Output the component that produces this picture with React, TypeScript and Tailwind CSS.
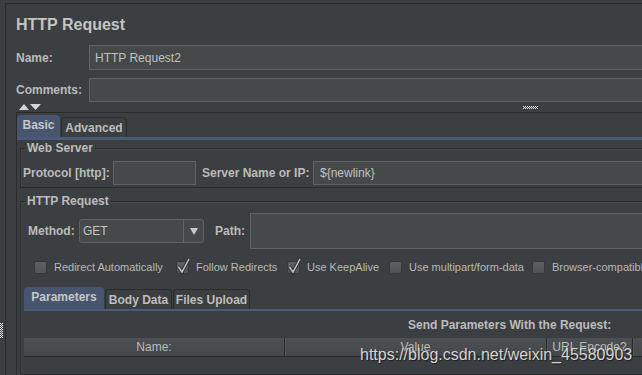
import React from "react"

const inputCls = "border border-[#5f6363] bg-[#45494a]"

function Grip({ w, h }: { w: number; h: number }) {
  const dots = []
  for (let y = 0; y < h; y++) {
    for (let x = 0; x < w; x++) {
      if ((x + y) % 2 === 0) dots.push(<rect key={`${x}-${y}`} x={x} y={y} width={1} height={1} fill="#e6e6e6" />)
    }
  }
  return (
    <svg width={w} height={h} viewBox={`0 0 ${w} ${h}`} shapeRendering="crispEdges">
      {dots}
    </svg>
  )
}

function Check({ checked, label, width }: { checked?: boolean; label: string; width?: string }) {
  return (
    <div className={`flex items-center h-full ${width ?? ""}`}>
      <div className="relative w-[13px] h-[13px] shrink-0 rounded-[2px] border border-[#33363a] bg-gradient-to-b from-[#5d6164] to-[#505457]">
        {checked && (
          <svg className="absolute -top-[5px] -left-[1px]" width="15" height="18" viewBox="0 0 15 18">
            <path d="M2.5 10 L6 15 L13 2" fill="none" stroke="#2b2b2b" strokeWidth="3.4" />
            <path d="M2.5 10 L6 15 L13 2" fill="none" stroke="#c9c9c9" strokeWidth="1.5" />
          </svg>
        )}
      </div>
      <span className="ml-[7px] text-[11px] text-[#b8b8b8] whitespace-nowrap">{label}</span>
    </div>
  )
}

function Tab({ label, active, width, tall }: { label: string; active?: boolean; width: string; tall?: boolean }) {
  return (
    <div
      className={`${width} ${tall ? "h-[22px]" : "h-[20px]"} rounded-t-[4px] border border-b-0 flex items-center justify-center font-bold text-[12px] ${
        active ? "bg-[#47556f] border-[#47556f] text-[#c6c6c6] pb-[3px]" : "bg-[#3c3f41] border-[#2b2b2b] text-[#bdbdbd]"
      }`}
    >
      {label}
    </div>
  )
}

export default function App() {
  return (
    <div className="relative w-[642px] h-[375px] overflow-hidden bg-[#3c3f41] font-['Liberation_Sans',Arial,sans-serif] text-[12px] text-[#bbbbbb]">
      <div className="flex h-full">
        <div className="w-[5px] shrink-0 pt-[323px]">
          <Grip w={3} h={15} />
        </div>
        <div className="w-[1100px] shrink-0 mt-[3px] border-l border-t border-[#2b2b2b] flex flex-col">
          <div className="h-[41px] flex items-center pl-[10px] text-[16px] font-bold text-[#c4c4c4]">HTTP Request</div>

          <div className="flex h-[25px]">
            <div className="w-[83px] pl-[10px] flex items-center font-bold">Name:</div>
            <div className={`flex-1 flex items-center pl-[5px] text-[#c0c0c0] ${inputCls}`}>HTTP Request2</div>
          </div>
          <div className="flex h-[24px] mt-[8px]">
            <div className="w-[83px] pl-[10px] flex items-center font-bold">Comments:</div>
            <div className={`flex-1 ${inputCls}`} />
          </div>

          <div className="h-[10px] flex items-start pt-[2px] pl-[13px]">
            <svg width="23" height="6" viewBox="0 0 23 6">
              <polygon points="0,6 5,0 10,6" fill="#d4d4d4" />
              <polygon points="11,0 22,0 16.5,6" fill="#d4d4d4" />
            </svg>
            <div className="ml-[481px] pt-[2px]">
              <Grip w={15} h={3} />
            </div>
          </div>

          <div className="ml-[10px] flex-1 border-l border-t border-[#2b2b2b] flex flex-col">
            <div className="pt-[2px] flex items-end">
              <Tab label="Basic" active width="w-[43px]" tall />
              <div className="ml-[1px]">
                <Tab label="Advanced" width="w-[66px]" />
              </div>
            </div>
            <div className="h-[3px] bg-[#4a5a7b]" />

            <div className="pl-[3px] flex-1 flex flex-col">
              <fieldset className="mt-[1px] border border-[#2b2b2b] shadow-[inset_1px_1px_0_#45484a] pb-[2px]">
                <legend className="ml-[5px] px-[1px] font-bold text-[12px] leading-[14px]">Web Server</legend>
                <div className="mt-[6px] flex h-[24px]">
                  <div className="w-[92px] pl-[2px] flex items-center font-bold whitespace-nowrap">Protocol [http]:</div>
                  <div className={`w-[83px] ${inputCls}`} />
                  <div className="ml-[6px] w-[111px] flex items-center font-bold whitespace-nowrap">Server Name or IP:</div>
                  <div className={`flex-1 flex items-center pl-[6px] text-[#c0c0c0] ${inputCls}`}>{"${newlink}"}</div>
                </div>
              </fieldset>

              <fieldset className="mt-[6px] flex-1 border border-[#2b2b2b] shadow-[inset_1px_1px_0_#45484a]">
                <legend className="ml-[5px] px-[1px] font-bold text-[12px] leading-[14px]">HTTP Request</legend>
                <div className="mt-[5px] flex items-center h-[36px]">
                  <div className="w-[58px] pl-[7px] font-bold">Method:</div>
                  <div className={`w-[125px] h-[24px] rounded-[3px] flex ${inputCls}`}>
                    <div className="flex-1 flex items-center pl-[3px] text-[#c4c4c4]">GET</div>
                    <div className="w-[20px] border-l border-[#5f6363] flex items-center justify-center">
                      <svg width="8" height="7" viewBox="0 0 8 7">
                        <polygon points="0,0 8,0 4,7" fill="#c8c8c8" />
                      </svg>
                    </div>
                  </div>
                  <div className="ml-[11px] w-[35px] font-bold">Path:</div>
                  <div className={`flex-1 h-full ${inputCls}`} />
                </div>

                <div className="mt-[11px] h-[14px] pl-[13px] flex">
                  <Check label="Redirect Automatically" width="w-[142px]" />
                  <Check label="Follow Redirects" checked width="w-[111px]" />
                  <Check label="Use KeepAlive" checked width="w-[102px]" />
                  <Check label="Use multipart/form-data" width="w-[143px]" />
                  <Check label="Browser-compatible headers" />
                </div>

                <div className="mt-[13px] pl-[3px] flex flex-col">
                  <div className="flex items-end">
                    <Tab label="Parameters" active width="w-[80px]" tall />
                    <div className="ml-[1px]">
                      <Tab label="Body Data" width="w-[67px]" />
                    </div>
                    <div className="ml-[1px]">
                      <Tab label="Files Upload" width="w-[77px]" />
                    </div>
                  </div>
                  <div className="h-[2px] bg-[#4a5a7b]" />
                  <div className="h-[27px] flex items-center pl-[384px] font-bold whitespace-nowrap">
                    Send Parameters With the Request:
                  </div>
                  <div className="h-[19px] flex bg-gradient-to-b from-[#4d5052] to-[#45484a] border-b border-[#2b2b2b]">
                    <div className="w-[261px] flex items-center justify-center border-r border-[#2b2b2b] shadow-[1px_0_0_#55585a]">Name:</div>
                    <div className="w-[262px] flex items-center justify-center border-r border-[#2b2b2b] shadow-[1px_0_0_#55585a]">Value</div>
                    <div className="w-[86px] flex items-center justify-center border-r border-[#2b2b2b] shadow-[1px_0_0_#55585a] whitespace-nowrap">URL Encode?</div>
                    <div className="w-[100px]" />
                  </div>
                </div>
              </fieldset>
            </div>
          </div>
        </div>
      </div>

      <div className="absolute left-[360px] top-[346px] text-[16px] leading-[18px] text-[#d4d4d4] [text-shadow:1px_1px_1px_#1e1e1e] whitespace-nowrap">
        https://blog.csdn.net/weixin_45580903
      </div>
    </div>
  )
}
